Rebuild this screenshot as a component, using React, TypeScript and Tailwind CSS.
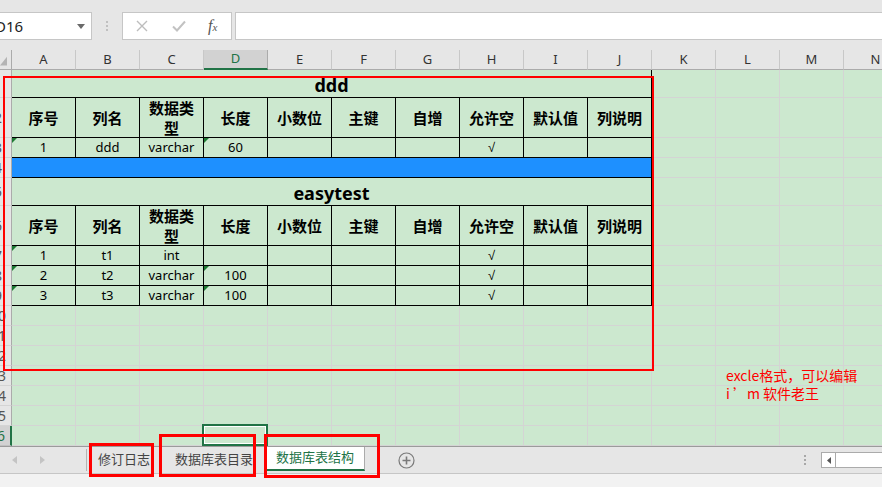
import React from "react";

const COLS = ["A", "B", "C", "D", "E", "F", "G", "H", "I", "J", "K", "L", "M", "N"];
const HEADS = ["序号", "列名", "数据类型", "长度", "小数位", "主键", "自增", "允许空", "默认值", "列说明"];

const RowHead = ({ n, active }: { n: number; active?: boolean }) => (
  <div
    className={
      active
        ? "w-[12px] shrink-0 h-full flex justify-end overflow-hidden bg-[#d2d2d2] border-r-2 border-r-[#217346] border-b border-b-[#c0c0c0] text-[#217346]"
        : "w-[12px] shrink-0 h-full flex justify-end overflow-hidden bg-[#e6e6e6] border-r border-r-[#ababab] border-b border-b-[#d4d4d4] text-[#555]"
    }
  >
    <div className="w-[26px] shrink-0 flex items-center justify-center text-[14px]">{n}</div>
  </div>
);

const Blank = ({ n }: { n: number }) => (
  <>
    {Array.from({ length: n }).map((_, i) => (
      <div key={i} className="w-[64px] shrink-0 h-full border-r border-b border-[#d4d4d4]" />
    ))}
  </>
);

const Title = ({ text }: { text: string }) => (
  <div className="w-[640px] shrink-0 h-full pt-[3px] border-r border-b border-black flex items-center justify-center font-bold text-[18px] text-black">
    {text}
  </div>
);

const Heads = () => (
  <>
    {HEADS.map((h) => (
      <div
        key={h}
        className="w-[64px] shrink-0 h-full px-[3px] border-r border-b border-black flex items-center justify-center text-center font-bold text-[15px] leading-[20px] text-black"
      >
        {h}
      </div>
    ))}
  </>
);

const Data = ({ vals, marks }: { vals: string[]; marks: number[] }) => (
  <>
    {vals.map((v, i) => (
      <div
        key={i}
        className={
          v === "√"
            ? "w-[64px] shrink-0 h-full border-r border-b border-black flex items-center justify-center font-['Liberation_Sans',sans-serif] text-[13px] text-black"
            : "relative w-[64px] shrink-0 h-full border-r border-b border-black flex items-center justify-center text-[13px] text-black"
        }
      >
        {marks.includes(i) && (
          <span className="absolute left-0 top-0 w-0 h-0 border-t-[5px] border-r-[5px] border-t-[#1e7b34] border-r-transparent" />
        )}
        {v}
      </div>
    ))}
  </>
);

const Arrow = ({ left }: { left?: boolean }) => (
  <svg width="5" height="8" viewBox="0 0 5 8">
    <polygon points={left ? "5,0 5,8 0,4" : "0,0 0,8 5,4"} fill="#c4c4c4" />
  </svg>
);

export default function App() {
  const emptyRows = [10, 11, 12, 13, 14, 15];

  return (
    <div className="w-[882px] h-[487px] overflow-hidden relative bg-[#e6e6e6] font-['Noto_Sans','Noto_Sans_CJK_SC',sans-serif]">
      {/* formula bar */}
      <div className="h-[50px] flex items-start pt-[12px]">
        <div className="w-[92px] shrink-0 h-[28px] bg-white border border-l-0 border-[#c6c6c6] flex items-center overflow-hidden">
          <span className="-ml-[5px] text-[15px] text-[#222]">D16</span>
          <svg className="ml-auto mr-[6px]" width="8" height="5" viewBox="0 0 8 5">
            <polygon points="0,0 8,0 4,5" fill="#6a6a6a" />
          </svg>
        </div>
        <div className="w-[30px] shrink-0 h-[28px] flex flex-col items-center justify-center gap-[2px]">
          <span className="w-[2px] h-[2px] bg-[#c0c0c0]" />
          <span className="w-[2px] h-[2px] bg-[#c0c0c0]" />
          <span className="w-[2px] h-[2px] bg-[#c0c0c0]" />
        </div>
        <div className="w-[110px] shrink-0 h-[28px] bg-white border border-[#c6c6c6] flex items-center pl-[13px]">
          <svg width="12" height="12" viewBox="0 0 12 12">
            <path d="M1 1L11 11M11 1L1 11" stroke="#bdbdbd" strokeWidth="1.4" fill="none" />
          </svg>
          <svg className="ml-[24px]" width="14" height="12" viewBox="0 0 14 12">
            <path d="M1 6.5L5 10.5L13 1.5" stroke="#c2c2c2" strokeWidth="2" fill="none" />
          </svg>
          <span className="ml-[22px] font-['Liberation_Serif',serif] italic text-[16px] leading-none text-[#555]">
            f<span className="text-[11px]">x</span>
          </span>
        </div>
        <div className="ml-[3px] flex-1 h-[28px] bg-white border border-r-0 border-[#c6c6c6]" />
      </div>

      {/* column headers */}
      <div className="h-[20px] flex">
        <div className="w-[12px] shrink-0 h-full border-r border-b border-[#ababab] flex items-end justify-end pr-[4px] pb-[3px]">
          <svg width="8" height="10" viewBox="0 0 8 10">
            <polygon points="8,0 8,10 0,10" fill="#b4b4b4" />
          </svg>
        </div>
        {COLS.map((c) => (
          <div
            key={c}
            className={
              c === "D"
                ? "w-[64px] shrink-0 h-full bg-[#d2d2d2] border-r border-r-[#ababab] border-b-2 border-b-[#217346] flex items-center justify-center text-[13px] text-[#217346]"
                : "w-[64px] shrink-0 h-full border-r border-r-[#c8c8c8] border-b border-b-[#ababab] flex items-center justify-center text-[13px] text-[#333]"
            }
          >
            {c}
          </div>
        ))}
      </div>

      {/* grid */}
      <div className="bg-[#cce8cf]">
        <div className="flex h-[28px]">
          <RowHead n={1} />
          <Title text="ddd" />
          <Blank n={4} />
        </div>
        <div className="flex h-[40px]">
          <RowHead n={2} />
          <Heads />
          <Blank n={4} />
        </div>
        <div className="flex h-[20px]">
          <RowHead n={3} />
          <Data vals={["1", "ddd", "varchar", "60", "", "", "", "√", "", ""]} marks={[0, 3]} />
          <Blank n={4} />
        </div>
        <div className="flex h-[20px]">
          <RowHead n={4} />
          <div className="w-[640px] shrink-0 h-full bg-[#1e90ff] border-r border-b border-black" />
          <Blank n={4} />
        </div>
        <div className="flex h-[28px]">
          <RowHead n={5} />
          <Title text="easytest" />
          <Blank n={4} />
        </div>
        <div className="flex h-[40px]">
          <RowHead n={6} />
          <Heads />
          <Blank n={4} />
        </div>
        <div className="flex h-[20px]">
          <RowHead n={7} />
          <Data vals={["1", "t1", "int", "", "", "", "", "√", "", ""]} marks={[0]} />
          <Blank n={4} />
        </div>
        <div className="flex h-[20px]">
          <RowHead n={8} />
          <Data vals={["2", "t2", "varchar", "100", "", "", "", "√", "", ""]} marks={[0, 3]} />
          <Blank n={4} />
        </div>
        <div className="flex h-[20px]">
          <RowHead n={9} />
          <Data vals={["3", "t3", "varchar", "100", "", "", "", "√", "", ""]} marks={[0, 3]} />
          <Blank n={4} />
        </div>
        {emptyRows.map((n) => (
          <div key={n} className="flex h-[20px]">
            <RowHead n={n} />
            <Blank n={14} />
          </div>
        ))}
        <div className="flex h-[20px]">
          <RowHead n={16} active />
          <Blank n={3} />
          <div className="relative w-[64px] shrink-0 h-full border-r border-b border-[#d4d4d4]">
            <div className="absolute -left-[2px] -top-[2px] w-[66px] h-[22px] border-2 border-[#217346]">
              <div className="w-full h-full border border-white" />
            </div>
          </div>
          <Blank n={10} />
        </div>
      </div>

      {/* sheet tabs */}
      <div className="h-[28px] flex border-t border-t-[#9b9b9b] border-b border-b-[#c6c6c6] bg-[#e6e6e6] text-[13px]">
        <div className="w-[86px] shrink-0 flex items-center pl-[12px] gap-[23px]">
          <Arrow left />
          <Arrow />
        </div>
        <div className="w-px h-[22px] self-center bg-[#b4b4b4]" />
        <div className="w-[74px] shrink-0 flex items-center justify-center text-[#444]">修订日志</div>
        <div className="w-px h-[22px] self-center bg-[#b4b4b4]" />
        <div className="w-[104px] shrink-0 flex items-center justify-center text-[#444]">数据库表目录</div>
        <div className="w-[99px] shrink-0 h-[24px] bg-white border-r border-r-[#ababab] border-b-2 border-b-[#217346] flex items-center justify-center text-[#217346]">
          数据库表结构
        </div>
        <div className="ml-[33px] self-center flex">
          <svg width="17" height="17" viewBox="0 0 17 17">
            <circle cx="8.5" cy="8.5" r="7.5" stroke="#7a7a7a" strokeWidth="1.2" fill="none" />
            <path d="M8.5 4.5V12.5M4.5 8.5H12.5" stroke="#7a7a7a" strokeWidth="1.6" />
          </svg>
        </div>
        <div className="ml-auto flex items-center">
          <div className="flex flex-col gap-[2px]">
            <span className="w-[2px] h-[2px] bg-[#a8a8a8]" />
            <span className="w-[2px] h-[2px] bg-[#a8a8a8]" />
            <span className="w-[2px] h-[2px] bg-[#a8a8a8]" />
          </div>
          <div className="ml-[15px] w-[61px] h-[16px] flex border border-r-0 border-[#ababab] bg-white">
            <div className="w-[14px] h-full border-r border-[#ababab] flex items-center justify-center">
              <svg width="4" height="7" viewBox="0 0 4 7">
                <polygon points="4,0 4,7 0,3.5" fill="#555" />
              </svg>
            </div>
          </div>
        </div>
      </div>
      <div className="h-[13px] bg-[#f2f2f2]" />

      {/* note text */}
      <div className="absolute left-[726px] top-[366px] font-['Noto_Sans_CJK_SC',sans-serif] text-[14px] leading-[18px] text-[#ff0000] whitespace-nowrap">
        <div>excle格式，可以编辑</div>
        <div>i ’m 软件老王</div>
      </div>

      {/* red annotations */}
      <div className="absolute left-[3px] top-[76px] w-[651px] h-[295px] border-2 border-[#ff0000]" />
      <div className="absolute left-[89px] top-[443px] w-[65px] h-[34px] border-[3px] border-[#ff0000]" />
      <div className="absolute left-[159px] top-[434px] w-[97px] h-[43px] border-[3px] border-[#ff0000]" />
      <div className="absolute left-[264px] top-[434px] w-[116px] h-[44px] border-[3px] border-[#ff0000]" />
    </div>
  );
}
